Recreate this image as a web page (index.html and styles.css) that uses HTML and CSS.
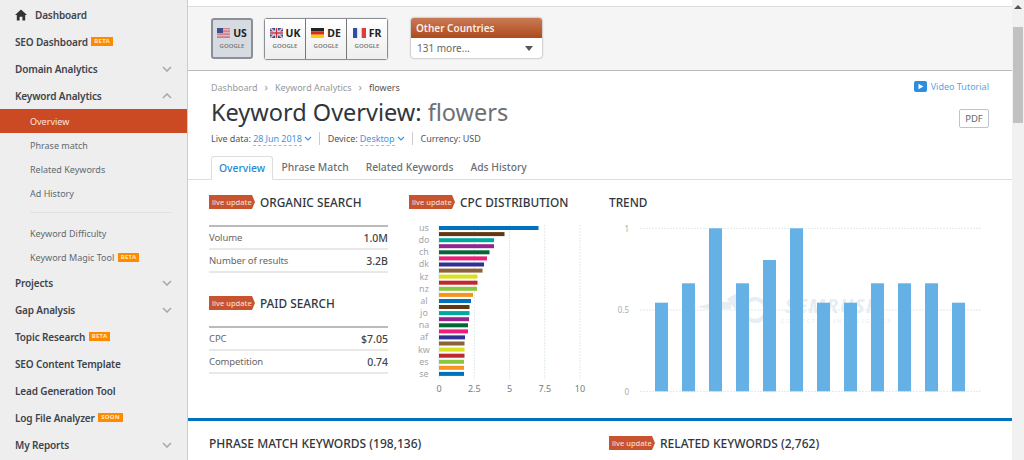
FILE: index.html
```html
<!DOCTYPE html>
<html lang="en">
<head>
    <meta charset="UTF-8">
    <title>Keyword Overview: flowers</title>
    <link rel="stylesheet" href="styles.css">
</head>
<body>
    <nav class="sidebar">
        <a class="item"><svg class="home" viewBox="0 0 12 12"><path d="M6 .5 12 6H10.2V11.5H7.4V7.8H4.6V11.5H1.8V6H0Z"/></svg><span class="home-label">Dashboard</span></a>
        <a class="item">SEO Dashboard <span class="tag">BETA</span></a>
        <a class="item">Domain Analytics <svg class="chev" viewBox="0 0 10 6"><path d="M1 1 5 5 9 1"/></svg></a>
        <a class="item">Keyword Analytics <svg class="chev" viewBox="0 0 10 6"><path d="M1 5 5 1 9 5"/></svg></a>
        <a class="sub active">Overview</a>
        <a class="sub">Phrase match</a>
        <a class="sub">Related Keywords</a>
        <a class="sub">Ad History</a>
        <div class="divider"></div>
        <a class="sub">Keyword Difficulty</a>
        <a class="sub">Keyword Magic Tool <span class="tag">BETA</span></a>
        <a class="item">Projects <svg class="chev" viewBox="0 0 10 6"><path d="M1 1 5 5 9 1"/></svg></a>
        <a class="item">Gap Analysis <svg class="chev" viewBox="0 0 10 6"><path d="M1 1 5 5 9 1"/></svg></a>
        <a class="item">Topic Research <span class="tag">BETA</span></a>
        <a class="item">SEO Content Template</a>
        <a class="item">Lead Generation Tool</a>
        <a class="item">Log File Analyzer <span class="tag">SOON</span></a>
        <a class="item">My Reports <svg class="chev" viewBox="0 0 10 6"><path d="M1 1 5 5 9 1"/></svg></a>
    </nav>

    <main class="main">
        <div class="topbar">
            <div class="db-btn selected">
                <div class="db-name">
                    <svg class="flag" viewBox="0 0 13 10"><rect width="13" height="10" fill="#f2f2f2"/><path d="M0 .7H13M0 2.2H13M0 3.7H13M0 5.2H13M0 6.7H13M0 8.2H13M0 9.6H13" stroke="#c4485a" stroke-width=".8"/><rect width="6" height="5" fill="#3f4f8c"/></svg>
                    US
                </div>
                <div class="db-sub">GOOGLE</div>
            </div>
            <div class="db-group">
                <div class="db-btn">
                    <div class="db-name">
                        <svg class="flag" viewBox="0 0 13 10"><rect width="13" height="10" fill="#2f4a8c"/><path d="M0 0 13 10M13 0 0 10" stroke="#fff" stroke-width="1.6"/><path d="M0 0 13 10M13 0 0 10" stroke="#c8313e" stroke-width=".6"/><path d="M6.5 0V10M0 5H13" stroke="#fff" stroke-width="3"/><path d="M6.5 0V10M0 5H13" stroke="#c8313e" stroke-width="1.6"/></svg>
                        UK
                    </div>
                    <div class="db-sub">GOOGLE</div>
                </div>
                <div class="db-btn">
                    <div class="db-name">
                        <svg class="flag" viewBox="0 0 13 10"><rect width="13" height="3.4" fill="#222"/><rect y="3.4" width="13" height="3.3" fill="#d52b1e"/><rect y="6.7" width="13" height="3.3" fill="#fc0"/></svg>
                        DE
                    </div>
                    <div class="db-sub">GOOGLE</div>
                </div>
                <div class="db-btn">
                    <div class="db-name">
                        <svg class="flag" viewBox="0 0 13 10"><rect width="4.4" height="10" fill="#2b50a8"/><rect x="4.4" width="4.3" height="10" fill="#f4f4f4"/><rect x="8.7" width="4.3" height="10" fill="#dd3c3c"/></svg>
                        FR
                    </div>
                    <div class="db-sub">GOOGLE</div>
                </div>
            </div>
            <div class="other">
                <div class="other-head">Other Countries</div>
                <div class="other-body">131 more...<span class="caret"></span></div>
            </div>
        </div>

        <header class="page-head">
            <div class="crumb-row">
                <div class="crumbs">
                    <span>Dashboard</span><i>&rsaquo;</i><span>Keyword Analytics</span><i>&rsaquo;</i><span class="current">flowers</span>
                </div>
                <a class="video"><svg viewBox="0 0 13 11"><rect width="13" height="11" rx="2" fill="#2a8fe0"/><path d="M4.5 2.8 9.5 5.5 4.5 8.2Z" fill="#fff"/></svg>Video Tutorial</a>
            </div>
            <div class="title-row">
                <h1>Keyword Overview: <span>flowers</span></h1>
                <button class="pdf">PDF</button>
            </div>
            <div class="meta">
                <span>Live data: <a class="drop">28 Jun 2018</a><svg class="mini" viewBox="0 0 8 5"><path d="M1 1 4 4 7 1"/></svg></span>
                <span class="sep">Device: <a class="drop">Desktop</a><svg class="mini" viewBox="0 0 8 5"><path d="M1 1 4 4 7 1"/></svg></span>
                <span class="sep">Currency: USD</span>
            </div>
            <div class="tabs">
                <a class="tab active">Overview</a>
                <a class="tab">Phrase Match</a>
                <a class="tab">Related Keywords</a>
                <a class="tab">Ads History</a>
            </div>
        </header>

        <section class="overview">
            <div class="col-stats">
                <h2 class="title"><span class="live">live update</span>ORGANIC SEARCH</h2>
                <div class="stats">
                    <div class="stat"><span>Volume</span><b>1.0M</b></div>
                    <div class="stat"><span>Number of results</span><b>3.2B</b></div>
                </div>
                <h2 class="title title-paid"><span class="live">live update</span>PAID SEARCH</h2>
                <div class="stats">
                    <div class="stat"><span>CPC</span><b>$7.05</b></div>
                    <div class="stat"><span>Competition</span><b>0.74</b></div>
                </div>
            </div>

            <div class="col-cpc">
                <h2 class="title"><span class="live">live update</span>CPC DISTRIBUTION</h2>
                <svg class="chart cpc" width="190" height="186" viewBox="0 0 190 186">
                    <g class="grid"><path d="M65.3 10V164M100.5 10V164M135.8 10V164M171 10V164"/></g>
                    <g class="axis-solid"><path d="M30 10V164"/></g>
                    <rect x="30" y="11" width="99.5" height="4" fill="#0071bc"/>
                    <rect x="30" y="17.1" width="65.5" height="4" fill="#603813"/>
                    <rect x="30" y="23.2" width="55" height="4" fill="#00a99d"/>
                    <rect x="30" y="29.2" width="55" height="4" fill="#93278f"/>
                    <rect x="30" y="35.3" width="50.5" height="4" fill="#006837"/>
                    <rect x="30" y="41.4" width="48" height="4" fill="#ed1e79"/>
                    <rect x="30" y="47.5" width="45" height="4" fill="#2e3192"/>
                    <rect x="30" y="53.6" width="43.5" height="4" fill="#8c6239"/>
                    <rect x="30" y="59.6" width="38.5" height="4" fill="#d9e021"/>
                    <rect x="30" y="65.7" width="38.5" height="4" fill="#c1272d"/>
                    <rect x="30" y="71.8" width="38" height="4" fill="#8cc63f"/>
                    <rect x="30" y="77.9" width="34" height="4" fill="#f7931e"/>
                    <rect x="30" y="84" width="32" height="4" fill="#0071bc"/>
                    <rect x="30" y="90" width="30.5" height="4" fill="#603813"/>
                    <rect x="30" y="96.1" width="30.5" height="4" fill="#00a99d"/>
                    <rect x="30" y="102.2" width="30" height="4" fill="#93278f"/>
                    <rect x="30" y="108.3" width="29" height="4" fill="#006837"/>
                    <rect x="30" y="114.4" width="29" height="4" fill="#ed1e79"/>
                    <rect x="30" y="120.4" width="26" height="4" fill="#2e3192"/>
                    <rect x="30" y="126.5" width="25.5" height="4" fill="#8c6239"/>
                    <rect x="30" y="132.6" width="25.5" height="4" fill="#d9e021"/>
                    <rect x="30" y="138.7" width="25.5" height="4" fill="#c1272d"/>
                    <rect x="30" y="144.8" width="25" height="4" fill="#8cc63f"/>
                    <rect x="30" y="150.8" width="25" height="4" fill="#f7931e"/>
                    <rect x="30" y="156.9" width="25" height="4" fill="#0071bc"/>
                    <g class="labels" text-anchor="middle">
                        <text x="15" y="16">us</text><text x="15" y="28">do</text><text x="15" y="40">ch</text>
                        <text x="15" y="52">dk</text><text x="15" y="65">kz</text><text x="15" y="77">nz</text>
                        <text x="15" y="89">al</text><text x="15" y="101">jo</text><text x="15" y="113">na</text>
                        <text x="15" y="125">af</text><text x="15" y="138">kw</text><text x="15" y="150">es</text>
                        <text x="15" y="162">se</text>
                    </g>
                    <g class="labels dark" text-anchor="middle">
                        <text x="30" y="177">0</text><text x="65.3" y="177">2.5</text><text x="100.5" y="177">5</text>
                        <text x="135.8" y="177">7.5</text><text x="171" y="177">10</text>
                    </g>
                </svg>
            </div>

            <div class="col-trend">
                <h2 class="title">TREND</h2>
                <svg class="chart trend" width="380" height="186" viewBox="0 0 380 186">
                    <g class="grid"><path d="M31 13.3H372M31 95H372M31 176.3H372"/></g>
                    <g class="watermark">
                        <path d="M88 92 Q108 86 122 87 L122 94 Q105 96 88 92Z"/>
                        <path d="M118 84 Q126 78 135 76 Q127 86 130 100 Q124 92 118 84Z"/>
                        <circle cx="146" cy="95" r="11" fill="none" stroke="#e6eef3" stroke-width="4"/>
                        <text class="wm-big" x="176" y="98">SEMRUSH</text>
                        <text class="wm-small" x="172" y="108">COLLECTIVE INTELLIGENCE</text>
                    </g>
                    <g fill="#65b0e4">
                        <rect x="46" y="87.7" width="13" height="88.6"/>
                        <rect x="73" y="68.3" width="13" height="108"/>
                        <rect x="100" y="13.3" width="13" height="163"/>
                        <rect x="127" y="68.3" width="13" height="108"/>
                        <rect x="154" y="45" width="13" height="131.3"/>
                        <rect x="181" y="13.3" width="13" height="163"/>
                        <rect x="208" y="87.7" width="13" height="88.6"/>
                        <rect x="235" y="87.7" width="13" height="88.6"/>
                        <rect x="262" y="68.3" width="13" height="108"/>
                        <rect x="289" y="68.3" width="13" height="108"/>
                        <rect x="316" y="68.3" width="13" height="108"/>
                        <rect x="343" y="87.7" width="13" height="88.6"/>
                    </g>
                    <g class="labels small" text-anchor="end">
                        <text x="20" y="17">1</text><text x="20" y="98">0.5</text><text x="20" y="180">0</text>
                    </g>
                </svg>
            </div>
        </section>

        <section class="lower">
            <h2 class="title">PHRASE MATCH KEYWORDS (198,136)</h2>
            <h2 class="title"><span class="live">live update</span>RELATED KEYWORDS (2,762)</h2>
        </section>
    </main>

    <div class="scrollbar">
        <div class="scroll-up"></div>
        <div class="thumb"></div>
    </div>
</body>
</html>
```

FILE: styles.css
```css
* {
    box-sizing: border-box;
}
html, body {
    height: 460px;
    overflow: hidden;
}
body {
    margin: 0;
    display: flex;
    font-family: "Noto Sans", "Open Sans", sans-serif;
    color: #333a42;
    background-color: #fff;
}
h1, h2 {
    margin: 0;
    font-weight: 400;
}

/* sidebar */
.sidebar {
    width: 188px;
    flex: none;
    height: 460px;
    padding-top: 1px;
    background-color: #eee;
    border-right: 1px solid #ccc;
}
.item {
    display: flex;
    align-items: center;
    height: 27px;
    padding-left: 15px;
    font-size: 10px;
    font-weight: 600;
    letter-spacing: -.15px;
    color: #3f444b;
    white-space: pre;
}
.sub {
    display: flex;
    align-items: center;
    height: 24px;
    padding-left: 30px;
    font-size: 9px;
    color: #626a72;
    white-space: pre;
}
.sub.active {
    background-color: #cb4a24;
    color: #fbe6dc;
}
.divider {
    height: 1px;
    margin: 7px 15px 8px 30px;
    background-color: #e2e2e2;
}
.tag {
    margin-left: 1px;
    padding: 0 3px;
    height: 9px;
    line-height: 9px;
    font-size: 6px;
    font-weight: 700;
    letter-spacing: .3px;
    color: #ffe6c2;
    background-color: #ff8a00;
}
.chev {
    width: 10px;
    height: 6px;
    margin-left: auto;
    margin-right: 15px;
    fill: none;
    stroke: #a9a9a9;
    stroke-width: 1.6;
}
.home {
    width: 12px;
    height: 12px;
    fill: #333;
}
.home-label {
    margin-left: 8px;
}

/* main column */
.main {
    flex: 1;
    min-width: 0;
    height: 460px;
}
.topbar {
    display: flex;
    align-items: flex-start;
    height: 65px;
    margin-top: 6px;
    padding: 11px 0 0 23px;
    background-color: #f5f5f5;
    border-top: 1px solid #ddd;
    border-bottom: 1px solid #bbb;
}
.db-btn {
    flex: 1;
    height: 40px;
    padding-top: 7px;
    text-align: center;
    background: linear-gradient(#fff, #eee);
}
.db-btn.selected {
    flex: none;
    width: 42px;
    height: 41px;
    padding-top: 6px;
    background: #d6dbe2;
    border: 2px solid #8c9096;
    border-radius: 3px;
}
.db-group {
    display: flex;
    width: 124px;
    margin-left: 11px;
    border: 1px solid #8c9096;
    border-radius: 3px;
    box-shadow: 0 0 1px #888;
}
.db-group .db-btn + .db-btn {
    border-left: 1px solid #777;
}
.db-name {
    display: flex;
    align-items: center;
    justify-content: center;
    gap: 3px;
    height: 14px;
    font-size: 10.5px;
    font-weight: 700;
    color: #222;
}
.db-sub {
    margin-top: 2px;
    font-size: 6px;
    font-weight: 600;
    color: #777;
}
.flag {
    width: 13px;
    height: 10px;
}
.other {
    width: 131px;
    height: 40px;
    margin-left: 23px;
    border-radius: 3px;
    background-color: #fff;
    box-shadow: 0 0 2px #777;
    overflow: hidden;
}
.other-head {
    height: 20px;
    line-height: 20px;
    padding-left: 5px;
    font-size: 10px;
    font-weight: 600;
    color: #fbeee6;
    background: linear-gradient(#c97a55, #ae4a1d);
}
.other-body {
    display: flex;
    align-items: center;
    justify-content: space-between;
    height: 20px;
    padding: 0 9px 0 6px;
    font-size: 10px;
    color: #666;
}
.caret {
    width: 0;
    height: 0;
    border-left: 4px solid transparent;
    border-right: 4px solid transparent;
    border-top: 5px solid #555;
}

.page-head {
    padding: 8px 23px 0 23px;
    height: 109px;
    border-bottom: 1px solid #ddd;
}
.crumb-row, .title-row {
    display: flex;
    justify-content: space-between;
    align-items: center;
}
.crumb-row {
    height: 14px;
}
.crumbs {
    font-size: 9px;
    color: #999;
}
.crumbs i {
    margin: 0 7px;
    font-style: normal;
    font-size: 11px;
}
.crumbs .current {
    color: #555;
}
.video {
    display: flex;
    align-items: center;
    gap: 4px;
    font-size: 9px;
    color: #5aa5e6;
}
.video svg {
    width: 13px;
    height: 11px;
}
.title-row {
    height: 33px;
    margin-top: 3px;
}
h1 {
    font-size: 23.5px;
    line-height: 33px;
    color: #30363d;
}
h1 span {
    color: #6b7076;
}
.meta {
    display: flex;
    align-items: center;
    height: 18px;
    font-size: 9px;
    letter-spacing: -.05px;
    color: #555;
}
.sep {
    margin-left: 7px;
    padding-left: 8px;
    border-left: 1px solid #ccc;
}
.drop {
    color: #3f95e0;
    border-bottom: 1px dashed #8fc0ea;
}
.mini {
    width: 8px;
    height: 5px;
    margin-left: 2px;
    vertical-align: 1px;
    fill: none;
    stroke: #3f95e0;
    stroke-width: 1.2;
}
.pdf {
    width: 30px;
    height: 19px;
    margin-top: 12px;
    padding: 0;
    font-family: inherit;
    font-size: 9.5px;
    color: #666;
    background-color: #fff;
    border: 1px solid #bcc5cc;
    border-radius: 2px;
}
.tabs {
    display: flex;
    margin-top: 9px;
}
.tab {
    height: 24px;
    line-height: 23px;
    padding: 0 8.5px;
    font-size: 10.3px;
    font-weight: 500;
    color: #6a7077;
}
.tab.active {
    width: 62px;
    padding: 0;
    text-align: center;
    color: #2a88cf;
    background-color: #fff;
    border: 1px solid #ddd;
    border-bottom: 1px solid #fff;
    border-radius: 3px 3px 0 0;
}

/* overview widgets */
.overview {
    display: grid;
    grid-template-columns: 200px 200px 1fr;
    height: 241px;
    padding: 15px 0 0 21px;
    border-bottom: 3px solid #0071bc;
}
.title {
    display: flex;
    align-items: center;
    height: 14px;
    font-size: 11.8px;
    font-weight: 500;
    white-space: nowrap;
    color: #30363d;
}
.live {
    flex: none;
    width: 46px;
    height: 14px;
    line-height: 14px;
    padding-left: 3px;
    margin-right: 5px;
    font-size: 7.5px;
    color: #f6d9cb;
    background-color: #c8542f;
    clip-path: polygon(0 0, 43px 0, 100% 50%, 43px 100%, 0 100%);
}
.stats {
    width: 179px;
    margin-top: 16px;
    border-top: 2px solid #bbb;
}
.stat {
    display: flex;
    justify-content: space-between;
    align-items: center;
    height: 23px;
    font-size: 9.5px;
    letter-spacing: -.1px;
    color: #666;
    border-bottom: 2px solid #e8e8e8;
}
.stat b {
    font-size: 10.5px;
    font-weight: 500;
    letter-spacing: 0;
    color: #444;
}
.title-paid {
    margin-top: 23px;
}
.chart {
    display: block;
    margin-top: 6px;
}
.grid path {
    fill: none;
    stroke: #dfe9ee;
    stroke-dasharray: 2 1;
}
.axis-solid path {
    stroke: #dfe9ee;
}
.labels text {
    font-size: 9px;
    fill: #a3a7ab;
}
.labels.dark text {
    fill: #777c81;
}
.labels.small text {
    font-size: 8px;
    fill: #aaa;
}
.watermark path {
    fill: #e6eef3;
}
.wm-big {
    font-size: 19px;
    font-weight: 700;
    font-style: italic;
    letter-spacing: 1.5px;
    fill: #e6eef3;
}
.wm-small {
    font-size: 6px;
    letter-spacing: 1.5px;
    fill: #e6eef3;
}

.lower {
    display: grid;
    grid-template-columns: 400px 1fr;
    padding: 15px 0 0 21px;
}
.lower .title {
    font-size: 12px;
}

/* scrollbar */
.scrollbar {
    width: 12px;
    flex: none;
    height: 460px;
    background-color: #f1f1f1;
}
.scroll-up {
    width: 0;
    height: 0;
    margin: 5px 0 0 2px;
    border-left: 4px solid transparent;
    border-right: 4px solid transparent;
    border-bottom: 4px solid #555;
}
.thumb {
    height: 96px;
    margin: 18px 1px 0;
    background-color: #c1c1c1;
}
```
